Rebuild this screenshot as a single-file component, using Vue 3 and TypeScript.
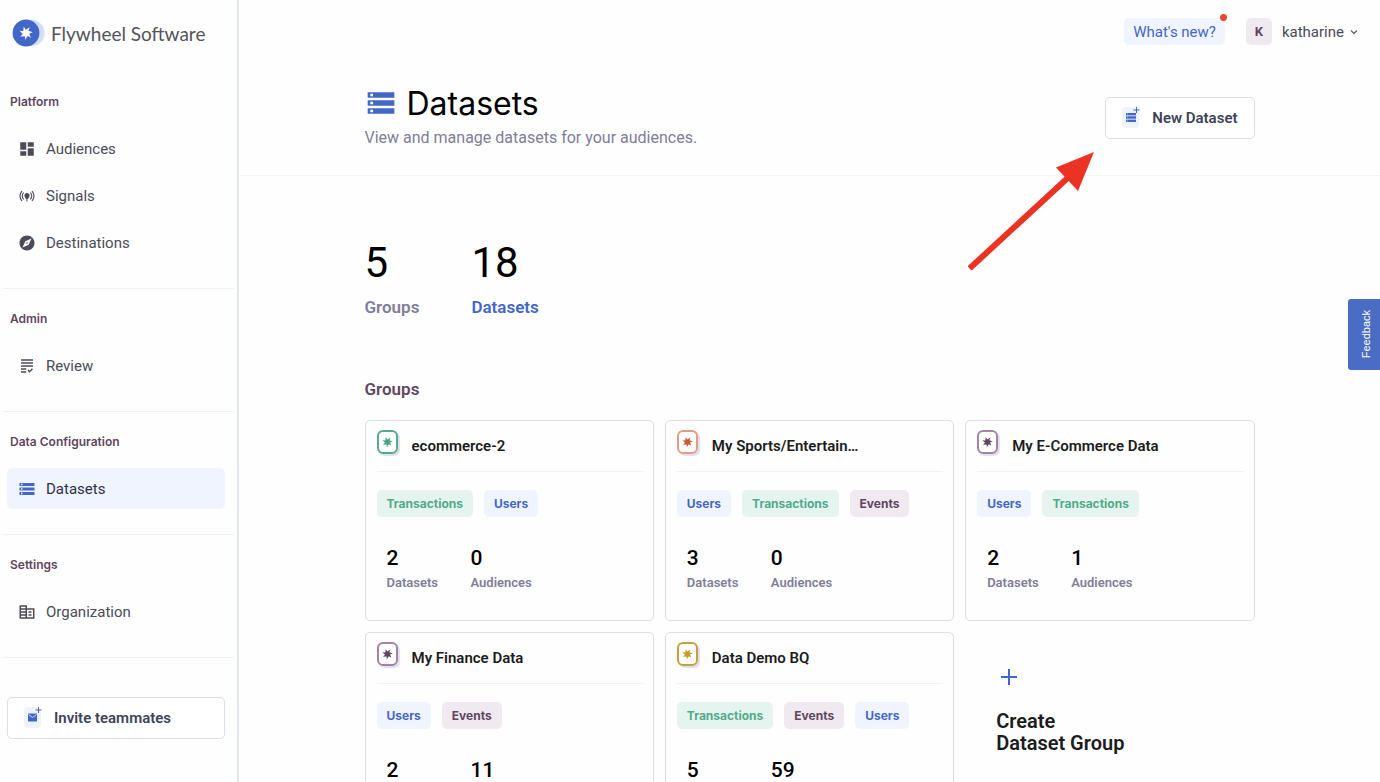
<script setup lang="ts">
type IconName = 'dashboard' | 'signals' | 'explore' | 'grading' | 'storage' | 'domain'
type Tag = 'Transactions' | 'Users' | 'Events'

interface NavItem {
  label: string
  icon: IconName
  active?: boolean
}

interface NavSection {
  title: string
  items: NavItem[]
}

interface Group {
  name: string
  tone: string
  tags: Tag[]
  datasets: number
  audiences: number
}

const icons: Record<IconName, string> = {
  dashboard: 'M3 13h8V3H3v10zm0 8h8v-6H3v6zm10 0h8V11h-8v10zm0-18v6h8V3h-8z',
  signals:
    'M15.5 11.5c0 2-2.5 3.5-2.5 5h-2c0-1.5-2.5-3-2.5-5C8.5 9.57 10.07 8 12 8s3.5 1.57 3.5 3.5zm-2.5 6h-2V19h2v-1.5zm9-5.5c0-2.76-1.12-5.26-2.93-7.07l-1.06 1.06C19.55 7.53 20.5 9.66 20.5 12c0 2.34-.95 4.47-2.49 6.01l1.06 1.06C20.88 17.26 22 14.76 22 12zM3.5 12c0-2.34.95-4.47 2.49-6.01L4.93 4.93C3.12 6.74 2 9.24 2 12c0 2.76 1.12 5.26 2.93 7.07l1.06-1.06C4.45 16.47 3.5 14.34 3.5 12zm14 0c0 1.52-.62 2.89-1.61 3.89l1.06 1.06C18.22 15.68 19 13.93 19 12c0-1.93-.78-3.68-2.05-4.95l-1.06 1.06c.99 1 1.61 2.37 1.61 3.89zM7.05 16.95l1.06-1.06c-1-1-1.61-2.37-1.61-3.89 0-1.52.62-2.89 1.61-3.89L7.05 7.05C5.78 8.32 5 10.07 5 12c0 1.93.78 3.68 2.05 4.95z',
  explore:
    'M12 10.9c-.61 0-1.1.49-1.1 1.1s.49 1.1 1.1 1.1c.61 0 1.1-.49 1.1-1.1s-.49-1.1-1.1-1.1zM12 2C6.48 2 2 6.48 2 12s4.48 10 10 10 10-4.48 10-10S17.52 2 12 2zm2.19 12.19L6 18l3.81-8.19L18 6l-3.81 8.19z',
  grading:
    'M4 7h16v2H4V7zm0 6h16v-2H4v2zm0 4h7v-2H4v2zm0 4h7v-2H4v2zm11.41-2.83L14 16.75l-1.41 1.41L15.41 21 20 16.42 18.58 15l-3.17 3.17zM4 3v2h16V3H4z',
  storage:
    'M2 20h20v-4H2v4zm2-3h2v2H4v-2zM2 4v4h20V4H2zm4 3H4V5h2v2zm-4 7h20v-4H2v4zm2-3h2v2H4v-2z',
  domain:
    'M12 7V3H2v18h20V7H12zM10 19H4v-2h6v2zm0-4H4v-2h6v2zm0-4H4V9h6v2zm0-4H4V5h6v2zm10 12h-8V9h8v10zM18 11h-4v2h4v-2zm0 4h-4v2h4v-2z',
}

const sections: NavSection[] = [
  {
    title: 'Platform',
    items: [
      { label: 'Audiences', icon: 'dashboard' },
      { label: 'Signals', icon: 'signals' },
      { label: 'Destinations', icon: 'explore' },
    ],
  },
  { title: 'Admin', items: [{ label: 'Review', icon: 'grading' }] },
  { title: 'Data Configuration', items: [{ label: 'Datasets', icon: 'storage', active: true }] },
  { title: 'Settings', items: [{ label: 'Organization', icon: 'domain' }] },
]

const groups: Group[] = [
  { name: 'ecommerce-2', tone: 'green', tags: ['Transactions', 'Users'], datasets: 2, audiences: 0 },
  { name: 'My Sports/Entertain…', tone: 'orange', tags: ['Users', 'Transactions', 'Events'], datasets: 3, audiences: 0 },
  { name: 'My E-Commerce Data', tone: 'plum', tags: ['Users', 'Transactions'], datasets: 2, audiences: 1 },
  { name: 'My Finance Data', tone: 'plum', tags: ['Users', 'Events'], datasets: 2, audiences: 11 },
  { name: 'Data Demo BQ', tone: 'gold', tags: ['Transactions', 'Events', 'Users'], datasets: 5, audiences: 59 },
]

// Seven swept blades around a solid hub, in a 20 x 20 box.
function wheelPoints(): string {
  const blades = 7
  const points: string[] = []
  for (let i = 0; i < blades; i++) {
    const tip = (i * 2 * Math.PI) / blades - 0.1
    const notch = tip + 0.22
    points.push(`${(10 + 9.8 * Math.cos(tip)).toFixed(2)},${(10 + 9.8 * Math.sin(tip)).toFixed(2)}`)
    points.push(`${(10 + 4.8 * Math.cos(notch)).toFixed(2)},${(10 + 4.8 * Math.sin(notch)).toFixed(2)}`)
  }
  return points.join(' ')
}

const wheel = wheelPoints()
</script>

<template>
  <div class="app">
    <aside class="sidebar">
      <a class="brand" href="#">
        <svg class="brand-mark" viewBox="0 0 34 28" aria-hidden="true">
          <circle cx="19.5" cy="14" r="13.2" fill="#d3defa" />
          <circle cx="14" cy="14" r="13.4" fill="#4267c8" />
          <svg x="7" y="7" width="14" height="14" viewBox="0 0 20 20">
            <polygon :points="wheel" fill="#fff" />
          </svg>
        </svg>
        <span>Flywheel Software</span>
      </a>

      <nav aria-label="Main">
        <section v-for="section in sections" :key="section.title" class="nav-section">
          <h2>{{ section.title }}</h2>
          <a
            v-for="item in section.items"
            :key="item.label"
            href="#"
            class="nav-item"
            :class="{ active: item.active }"
          >
            <svg viewBox="0 0 24 24" aria-hidden="true">
              <path :d="icons[item.icon]" fill-rule="evenodd" />
            </svg>
            <span>{{ item.label }}</span>
          </a>
        </section>
      </nav>

      <div class="invite">
        <button type="button" class="outline-button">
          <svg class="plus-icon" viewBox="0 0 20 24" aria-hidden="true">
            <rect x="1" y="1" width="17" height="21" rx="4" fill="#eef3fe" />
            <path d="M5 7.500h9v8H5z" fill="#4267c8" />
            <path d="M5.500 8.500l4 3 4-3" fill="none" stroke="#c9d6f7" stroke-width="1" />
            <path d="M15.500 1v6M12.500 4h6" stroke="#4267c8" stroke-width="1" />
          </svg>
          <span>Invite teammates</span>
        </button>
      </div>
    </aside>

    <main class="main">
      <div class="topbar">
        <button type="button" class="whats-new">What's new?<i class="dot"></i></button>
        <button type="button" class="account">
          <span class="avatar">K</span>
          <span>katharine</span>
          <svg viewBox="0 0 10 10" aria-hidden="true">
            <path d="M2 3.500l3 3 3-3" fill="none" stroke="#6b6170" stroke-width="1.300" />
          </svg>
        </button>
      </div>

      <header class="page-header">
        <div class="container header-row">
          <div>
            <h1>
              <svg viewBox="0 0 24 24" aria-hidden="true"><path :d="icons.storage" /></svg>
              <span>Datasets</span>
            </h1>
            <p>View and manage datasets for your audiences.</p>
          </div>
          <button type="button" class="outline-button">
            <svg class="plus-icon" viewBox="0 0 20 24" aria-hidden="true">
              <rect x="1" y="1" width="17" height="21" rx="4" fill="#eef3fe" />
              <rect x="5" y="7" width="10" height="9" fill="#a9bcec" />
              <path
                d="M5 7h1.500v2H5zM7 7h8v2H7zM5 10.500h1.500v2H5zM7 10.500h8v2H7zM5 14h1.500v2H5zM7 14h8v2H7z"
                fill="#4267c8"
              />
              <path d="M15.500 1v6M12.500 4h6" stroke="#4267c8" stroke-width="1" />
            </svg>
            <span>New Dataset</span>
          </button>
        </div>
        <svg class="pointer" viewBox="0 0 126 118" aria-hidden="true">
          <path d="M1.500 116.500L104 22" stroke="#ea3323" stroke-width="6" />
          <path d="M126 0L88 15.500 110 39z" fill="#ea3323" />
        </svg>
      </header>

      <div class="container">
        <div class="totals">
          <a href="#" class="total"><strong>5</strong><span>Groups</span></a>
          <a href="#" class="total current"><strong>18</strong><span>Datasets</span></a>
        </div>

        <h2 class="grid-title">Groups</h2>
        <div class="grid">
          <article v-for="group in groups" :key="group.name" class="card" :class="group.tone">
            <header>
              <span class="badge">
                <svg viewBox="0 0 20 20" aria-hidden="true"><polygon :points="wheel" /></svg>
              </span>
              <h3>{{ group.name }}</h3>
            </header>
            <div class="tags">
              <span v-for="tag in group.tags" :key="tag" class="tag" :class="tag.toLowerCase()">{{ tag }}</span>
            </div>
            <dl>
              <div>
                <dt>Datasets</dt>
                <dd>{{ group.datasets }}</dd>
              </div>
              <div>
                <dt>Audiences</dt>
                <dd>{{ group.audiences }}</dd>
              </div>
            </dl>
          </article>
          <button type="button" class="create">
            <svg viewBox="0 0 16 16" aria-hidden="true">
              <path d="M8 0v16M0 8h16" stroke="#4267c8" stroke-width="2" />
            </svg>
            <span>Create<br />Dataset Group</span>
          </button>
        </div>
      </div>
    </main>

    <button type="button" class="feedback">Feedback</button>
  </div>
</template>

<style>
body {
  margin: 0;
  overflow: hidden;
}
</style>

<style scoped>
.app {
  --blue: #4267c8;
  --line: #e2e5ee;
  --outline: #d9deea;
  --plum: #5f4660;
  --muted: #817d98;
  display: flex;
  height: 100vh;
  overflow: hidden;
  background: #fefefe;
  color: #1b1c20;
  font-family: Roboto, 'Liberation Sans', sans-serif;
  font-size: 15px;
}

button {
  font: inherit;
  color: inherit;
  background: none;
  border: 0;
  padding: 0;
  cursor: pointer;
}

a {
  color: inherit;
  text-decoration: none;
}

h1,
h2,
h3,
p,
dl,
dd {
  margin: 0;
}

.sidebar {
  box-sizing: border-box;
  flex: 0 0 239px;
  border-right: 2px solid var(--line);
  padding: 0 3px;
}

.brand {
  display: flex;
  align-items: center;
  gap: 5px;
  height: 72px;
  box-sizing: border-box;
  padding: 0 0 6px 9px;
  color: #54545a;
  font-family: Lato, sans-serif;
  font-size: 19px;
}

.brand-mark {
  width: 34px;
  height: 28px;
}

.nav-section {
  display: flex;
  flex-direction: column;
  padding: 20px 9px 25px 4px;
  gap: 6px;
}

.nav-section + .nav-section {
  border-top: 1px solid #f1f1f5;
}

.nav-section h2 {
  margin: 0 0 10px 3px;
  color: var(--plum);
  font-family: Inter, sans-serif;
  font-size: 12px;
  font-weight: 600;
  line-height: 20px;
}

.nav-item {
  display: flex;
  align-items: center;
  gap: 10px;
  height: 41px;
  padding-left: 11px;
  border-radius: 5px;
  color: #4c4b57;
}

.nav-item svg {
  width: 18px;
  height: 18px;
  fill: #4c4b57;
}

.nav-item.active {
  background: #f0f4fe;
  color: #2c3148;
}

.nav-item.active svg {
  fill: var(--blue);
}

.invite {
  border-top: 1px solid #f1f1f5;
  padding: 39px 9px 0 4px;
}

.outline-button {
  display: flex;
  align-items: center;
  gap: 11px;
  box-sizing: border-box;
  height: 42px;
  padding: 0 16px 0 15px;
  border: 1px solid var(--outline);
  border-radius: 5px;
  background: #fff;
  color: #3d4457;
  font-weight: 600;
}

.invite .outline-button {
  width: 100%;
}

.plus-icon {
  width: 20px;
  height: 24px;
}

.main {
  flex: 1;
  min-width: 0;
}

.topbar {
  display: flex;
  justify-content: flex-end;
  gap: 21px;
  padding: 18px 21px 0 0;
  height: 27px;
}

.whats-new {
  position: relative;
  padding: 0 9px;
  border-radius: 5px;
  background: #f0f4fe;
  color: var(--blue);
}

.dot {
  position: absolute;
  top: -4px;
  right: -2px;
  width: 7px;
  height: 7px;
  border-radius: 50%;
  background: #ea4632;
}

.account {
  display: flex;
  align-items: center;
  color: #4c4b57;
}

.account svg {
  width: 10px;
  height: 10px;
  margin-left: 5px;
}

.avatar {
  width: 26px;
  margin-right: 10px;
  border-radius: 5px;
  background: #f0eaf0;
  color: var(--plum);
  font-size: 13px;
  font-weight: 700;
  line-height: 27px;
}

.container {
  max-width: 890px;
  margin: 0 auto;
  padding: 0 24px;
}

.page-header {
  position: relative;
  padding: 37px 0 25px;
  border-bottom: 1px solid #f5f5f8;
}

.header-row {
  display: flex;
  justify-content: space-between;
}

.header-row .outline-button {
  margin-top: 15px;
}

h1 {
  display: flex;
  align-items: center;
  gap: 10px;
  height: 42px;
  color: #000;
  font-family: Inter, sans-serif;
  font-size: 32px;
  font-weight: 400;
}

h1 svg {
  width: 32px;
  height: 32px;
  fill: var(--blue);
}

.header-row p {
  margin-top: 2px;
  color: var(--muted);
  font-size: 16px;
  line-height: 24px;
}

.pointer {
  position: absolute;
  top: 107px;
  left: calc(50% + 158px);
  width: 126px;
  height: 118px;
}

.totals {
  display: flex;
  gap: 52px;
  padding: 62px 0 60px;
}

.total {
  display: flex;
  flex-direction: column;
  gap: 7px;
  color: var(--muted);
  font-size: 17px;
  font-weight: 600;
  line-height: 24px;
}

.total.current {
  color: var(--blue);
}

.total strong {
  color: #000;
  font-size: 42px;
  font-weight: 400;
  line-height: 50px;
}

.grid-title {
  color: var(--plum);
  font-size: 17px;
  font-weight: 600;
  line-height: 20px;
}

.grid {
  display: grid;
  grid-template-columns: repeat(3, minmax(0, 1fr));
  gap: 11px;
  margin-top: 21px;
}

.card {
  box-sizing: border-box;
  height: 201px;
  padding: 9px 10px 9px 11px;
  border: 1px solid var(--outline);
  border-radius: 5px;
}

.card header {
  display: flex;
  gap: 14px;
  height: 41px;
  border-bottom: 1px solid #f1f1f5;
}

.badge {
  display: grid;
  place-items: center;
  box-sizing: border-box;
  width: 21px;
  height: 24px;
  border: 2px solid;
  border-radius: 6px;
  box-shadow: 2px 2px 1px #dde1ec;
}

.badge svg {
  width: 11px;
  height: 12px;
}

.green .badge { border-color: #55a98c; fill: #46a583; }
.orange .badge { border-color: #e39b82; fill: #c75a36; }
.plum .badge { border-color: #a3839f; fill: #5f4660; }
.gold .badge { border-color: #c4a044; fill: #c99a2c; }

.card h3 {
  font-size: 15px;
  font-weight: 600;
  line-height: 32px;
}

.tags {
  display: flex;
  gap: 11px;
  margin-top: 18px;
}

.tag {
  padding: 0 10px;
  border-radius: 5px;
  font-family: Inter, sans-serif;
  font-size: 12px;
  font-weight: 700;
  line-height: 27px;
}

.transactions { background: #e6f4f0; color: #50ab8b; }
.users { background: #f0f4fe; color: var(--blue); }
.events { background: #f0eaf0; color: var(--plum); }

dl {
  display: flex;
  margin: 27px 10px 0;
}

dl div {
  display: flex;
  flex-direction: column-reverse;
  width: 84px;
}

dt {
  color: var(--muted);
  font-size: 13px;
  font-weight: 600;
  line-height: 22px;
}

dd {
  color: #000;
  font-size: 21px;
  font-weight: 500;
  line-height: 28px;
}

.create {
  display: flex;
  flex-direction: column;
  align-items: flex-start;
  gap: 25px;
  padding: 37px 31px 0;
  font-size: 20px;
  font-weight: 600;
  line-height: 22px;
  text-align: left;
}

.create svg {
  width: 16px;
  height: 16px;
  margin-left: 5px;
}

.feedback {
  position: fixed;
  top: 299px;
  right: 0;
  width: 32px;
  height: 71px;
  padding-left: 3px;
  border-radius: 3px 0 0 3px;
  background: #4a6cc4;
  color: #fff;
  font-family: 'Liberation Sans', sans-serif;
  font-size: 11px;
  writing-mode: sideways-lr;
}
</style>
